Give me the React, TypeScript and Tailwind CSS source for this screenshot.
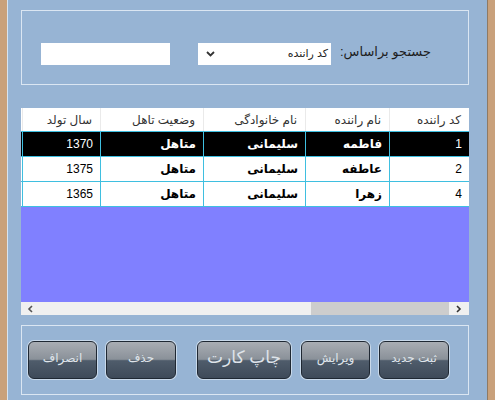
import React from "react";

const COLS = [
  { key: "code", title: "کد راننده", w: "w-[80px]" },
  { key: "name", title: "نام راننده", w: "w-[84px]" },
  { key: "family", title: "نام خانوادگی", w: "w-[102px]" },
  { key: "status", title: "وضعیت تاهل", w: "w-[103px]" },
  { key: "birth", title: "سال تولد", w: "w-[78px]" },
];

const ROWS = [
  { code: "1", name: "فاطمه", family: "سلیمانی", status: "متاهل", birth: "1370" },
  { code: "2", name: "عاطفه", family: "سلیمانی", status: "متاهل", birth: "1375" },
  { code: "4", name: "زهرا", family: "سلیمانی", status: "متاهل", birth: "1365" },
];

const font = "font-['Liberation_Sans','DejaVu_Sans',sans-serif]";

function GlossButton({ label, w, big }: { label: string; w: string; big?: boolean }) {
  return (
    <div className={`${w} h-[40px] rounded-[7px] p-px bg-[#c9d9ea]`}>
      <button
        type="button"
        className={`w-full h-full rounded-[6px] border border-[#1f2833] bg-[linear-gradient(to_bottom,#a9adb3_0%,#8a9199_48%,#4f5c6b_52%,#3e4a59_100%)] text-[#dfe4ea] pb-[4px] ${
          big ? "text-[17px]" : "text-[12px]"
        } ${font}`}
      >
        {label}
      </button>
    </div>
  );
}

export default function App() {
  return (
    <div className={`flex w-[495px] h-[400px] overflow-hidden ${font}`}>
      <div className="w-[8px] bg-[#c9a17b] border-r border-[#d8e4f0]" />
      <div className="flex-1 flex flex-col bg-[#97b4d4] pl-[13px] pr-[18px] pt-[10px]">
        {/* Search group */}
        <div dir="rtl" className="h-[75px] border border-[#dbe6f2] flex items-center pr-[37px] pt-[12px]">
          <span className="w-[100px] text-right text-[13px] text-[#1d1d1d] pb-[3px]">جستجو براساس:</span>
          <div className="w-[133px] h-[22px] bg-white flex items-center justify-between pr-[3px] pl-[8px]">
            <span className="text-[11px] text-[#222]">کد راننده</span>
            <svg width="9" height="6" viewBox="0 0 9 6">
              <path d="M1 1l3.5 3.5L8 1" fill="none" stroke="#333" strokeWidth="1.8" />
            </svg>
          </div>
          <div className="w-[28px]" />
          <div className="w-[129px] h-[22px] bg-white" />
        </div>

        {/* Grid */}
        <div dir="rtl" className="mt-[23px] h-[207px] flex flex-col bg-[#8080ff]">
          <div className="flex h-[23px] bg-white">
            {COLS.map((c) => (
              <div
                key={c.key}
                className={`${c.w} border-l border-[#eaeaea] flex items-center pr-[8px] text-[12px] text-[#333]`}
              >
                {c.title}
              </div>
            ))}
          </div>
          {ROWS.map((r, i) => (
            <div
              key={r.code}
              className={`flex h-[25px] border-t border-[#3fbfe0] ${i === 0 ? "bg-black" : "bg-white"}`}
            >
              {COLS.map((c) => (
                <div
                  key={c.key}
                  className={`${c.w} border-l border-[#3fbfe0] flex items-center pr-[7px] text-[12px] ${
                    i === 0 ? "text-white" : "text-black"
                  } ${c.key === "code" || c.key === "birth" ? "font-normal" : "font-bold"}`}
                >
                  {r[c.key as keyof typeof r]}
                </div>
              ))}
            </div>
          ))}
          <div className="flex-1 border-t border-[#3fbfe0]" />
          <div dir="ltr" className="h-[13px] bg-[#f0f0f0] flex items-center">
            <div className="w-[18px] flex justify-center">
              <svg width="6" height="8" viewBox="0 0 6 8">
                <path d="M5 1L2 4l3 3" fill="none" stroke="#555" strokeWidth="1.6" />
              </svg>
            </div>
            <div className="w-[272px]" />
            <div className="w-[138px] h-[13px] bg-[#cdcdcd]" />
            <div className="flex-1 flex justify-center">
              <svg width="6" height="8" viewBox="0 0 6 8">
                <path d="M1 1l3 3-3 3" fill="none" stroke="#333" strokeWidth="1.6" />
              </svg>
            </div>
          </div>
        </div>

        {/* Buttons group */}
        <div className="mt-[10px] h-[70px] border border-[#dbe6f2] flex items-center pl-[5px]">
          <GlossButton label="انصراف" w="w-[71px]" />
          <div className="w-[7px]" />
          <GlossButton label="حذف" w="w-[72px]" />
          <div className="w-[19px]" />
          <GlossButton label="چاپ کارت" w="w-[96px]" big />
          <div className="w-[8px]" />
          <GlossButton label="ویرایش" w="w-[71px]" />
          <div className="w-[7px]" />
          <GlossButton label="ثبت جدید" w="w-[72px]" />
        </div>
      </div>
      <div className="w-[8px] bg-[#c9a17b] border-l border-[#8f7a64]" />
    </div>
  );
}
